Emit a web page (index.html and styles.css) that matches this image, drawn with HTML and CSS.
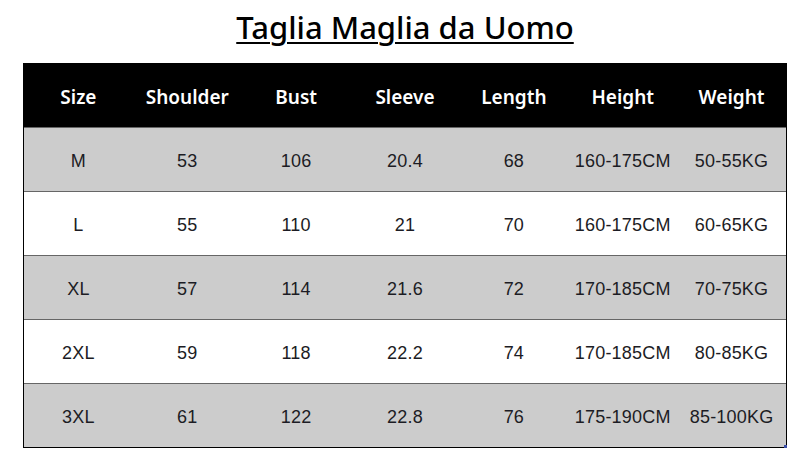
FILE: index.html
```html
<!DOCTYPE html>
<html>
<head>
<meta charset="utf-8">
<link rel="stylesheet" href="styles.css">
</head>
<body>
<div class="page">
  <h1 class="title">Taglia Maglia da Uomo</h1>
  <div class="table">
    <div class="row head">
      <div>Size</div><div>Shoulder</div><div>Bust</div><div>Sleeve</div><div>Length</div><div>Height</div><div>Weight</div>
    </div>
    <div class="row gray">
      <div>M</div><div>53</div><div>106</div><div>20.4</div><div>68</div><div>160-175CM</div><div>50-55KG</div>
    </div>
    <div class="row white">
      <div>L</div><div>55</div><div>110</div><div>21</div><div>70</div><div>160-175CM</div><div>60-65KG</div>
    </div>
    <div class="row gray">
      <div>XL</div><div>57</div><div>114</div><div>21.6</div><div>72</div><div>170-185CM</div><div>70-75KG</div>
    </div>
    <div class="row white">
      <div>2XL</div><div>59</div><div>118</div><div>22.2</div><div>74</div><div>170-185CM</div><div>80-85KG</div>
    </div>
    <div class="row gray">
      <div>3XL</div><div>61</div><div>122</div><div>22.8</div><div>76</div><div>175-190CM</div><div>85-100KG</div>
    </div>
    <span class="handle"></span>
  </div>
</div>
</body>
</html>
```
FILE: styles.css
```css
* { box-sizing: border-box; }
html, body { margin: 0; padding: 0; background: #fff; }
.page { width: 810px; height: 468px; padding-top: 9px; }
.title {
  margin: 0;
  height: 54px;
  text-align: center;
  font-family: "Noto Sans", sans-serif;
  font-weight: 500;
  font-size: 31px;
  line-height: 36px;
  color: #000;
  text-decoration: underline;
  text-decoration-thickness: 2px;
  text-underline-offset: 3px;
}
.table {
  position: relative;
  width: 764px;
  margin: 0 auto 0 23px;
  border: 1px solid #000;
  border-top: none;
}
.row {
  display: grid;
  grid-template-columns: repeat(7, 1fr);
  height: 64px;
  align-items: center;
  text-align: center;
  padding-top: 3px;
}
.row > div { white-space: nowrap; }
.head {
  background: #000;
  color: #fff;
  font-family: "Noto Sans", sans-serif;
  font-weight: 600;
  font-size: 19px;
}
.gray, .white {
  border-top: 1px solid #666;
  font-family: "Liberation Sans", Arial, sans-serif;
  font-size: 18px;
  letter-spacing: 0.2px;
  color: #1c1c24;
}
.gray { background: #cccccc; }
.white { background: #fff; }
.handle {
  position: absolute;
  right: -1px;
  bottom: -1px;
  width: 3px;
  height: 3px;
  background: #3b4fa8;
}
```
